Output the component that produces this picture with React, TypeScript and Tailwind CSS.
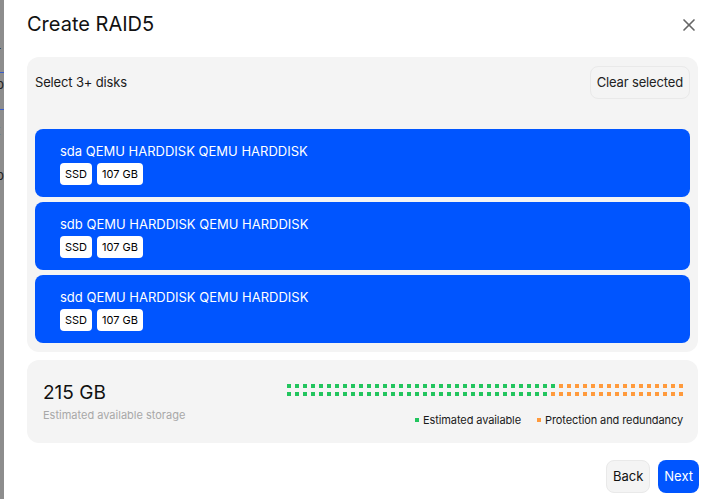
import React from "react";
import { X } from "lucide-react";

const disks = ["sda", "sdb", "sdd"];

function DotBar() {
  const cols = 50;
  const green = 67;
  return (
    <div className="grid grid-flow-col grid-rows-2 gap-x-[4px] gap-y-[4px]">
      {Array.from({ length: cols * 2 }).map((_, i) => (
        <div
          key={i}
          className={i < green ? "w-[4px] h-[4px] bg-[#22c55e]" : "w-[4px] h-[4px] bg-[#ff9a3c]"}
        />
      ))}
    </div>
  );
}

export default function App() {
  return (
    <div
      className="w-[710px] h-[499px] flex overflow-hidden bg-white text-[#1a1a1a]"
      style={{ fontFamily: "Inter, 'Noto Sans', sans-serif" }}
    >
      <div className="w-[4px] h-full bg-[#8d8d8d] flex flex-col overflow-hidden text-[13px] text-[#222] leading-none">
        <div className="h-[45px]" />
        <div className="-ml-[4px]">r</div>
        <div className="h-[14px]" />
        <div className="h-px bg-[#3a5cc8]" />
        <div className="h-[5px]" />
        <div className="-ml-[4px]">p</div>
        <div className="h-[18px]" />
        <div className="h-px bg-[#3a5cc8]" />
        <div className="h-[14px]" />
        <div className="-ml-[4px]">t</div>
        <div className="h-[32px]" />
        <div className="-ml-[4px]">p</div>
      </div>
      <div className="flex-1 flex flex-col pl-[23px] pr-[12px]">
        <div className="flex items-center justify-between h-[46px] pt-[2px]">
          <div className="text-[20px] leading-[28px] text-[#111]">Create RAID5</div>
          <X size={20} strokeWidth={2} className="text-[#666] -mr-[1px] mt-[2px]" />
        </div>
        <div className="mt-[11px] bg-[#f4f4f4] rounded-[12px] px-[8px] pt-[9px] pb-[9px]">
          <div className="flex items-center justify-between h-[33px]">
            <div className="text-[13px] tracking-[-0.15px]">Select 3+ disks</div>
            <div className="h-[33px] px-[6px] flex items-center rounded-[8px] border border-[#e9e9e9] text-[13px] tracking-[-0.15px] text-[#222]">
              Clear selected
            </div>
          </div>
          <div className="mt-[30px] flex flex-col gap-[5px]">
            {disks.map((d) => (
              <div key={d} className="h-[68px] bg-[#0055ff] rounded-[8px] pl-[25px] pt-[14px]">
                <div className="text-[13px] leading-[16px] text-white">{d} QEMU HARDDISK QEMU HARDDISK</div>
                <div className="flex gap-[5px] mt-[4px]">
                  <div className="h-[22px] px-[5px] bg-white rounded-[4px] text-[11px] text-black flex items-center">SSD</div>
                  <div className="h-[22px] px-[5px] bg-white rounded-[4px] text-[11px] text-black flex items-center">107 GB</div>
                </div>
              </div>
            ))}
          </div>
        </div>
        <div className="mt-[8px] h-[83px] bg-[#f4f4f4] rounded-[12px] pl-[16px] pr-[15px] pt-[19px] flex justify-between items-start">
          <div className="flex flex-col">
            <div className="text-[19px] leading-[28px] text-[#111]">215 GB</div>
            <div className="text-[11px] leading-[16px] text-[#a8a8a8]">Estimated available storage</div>
          </div>
          <div className="flex flex-col items-end mt-[5px]">
            <DotBar />
            <div className="flex items-center gap-[16px] mt-[16px] text-[11px] leading-[16px] text-[#1a1a1a] tracking-[-0.1px]">
              <div className="flex items-center gap-[4px]">
                <div className="w-[4px] h-[4px] bg-[#22c55e]" />
                <span>Estimated available</span>
              </div>
              <div className="flex items-center gap-[4px]">
                <div className="w-[4px] h-[4px] bg-[#ff9a3c]" />
                <span>Protection and redundancy</span>
              </div>
            </div>
          </div>
        </div>
        <div className="mt-[17px] flex justify-end gap-[8px] -mr-[1px]">
          <div className="h-[33px] px-[6px] flex items-center rounded-[8px] bg-[#f4f4f4] border border-[#e9e9e9] text-[13px] text-[#111]">
            Back
          </div>
          <div className="h-[33px] px-[6px] flex items-center rounded-[8px] bg-[#0055ff] text-[13px] text-white">
            Next
          </div>
        </div>
      </div>
    </div>
  );
}
